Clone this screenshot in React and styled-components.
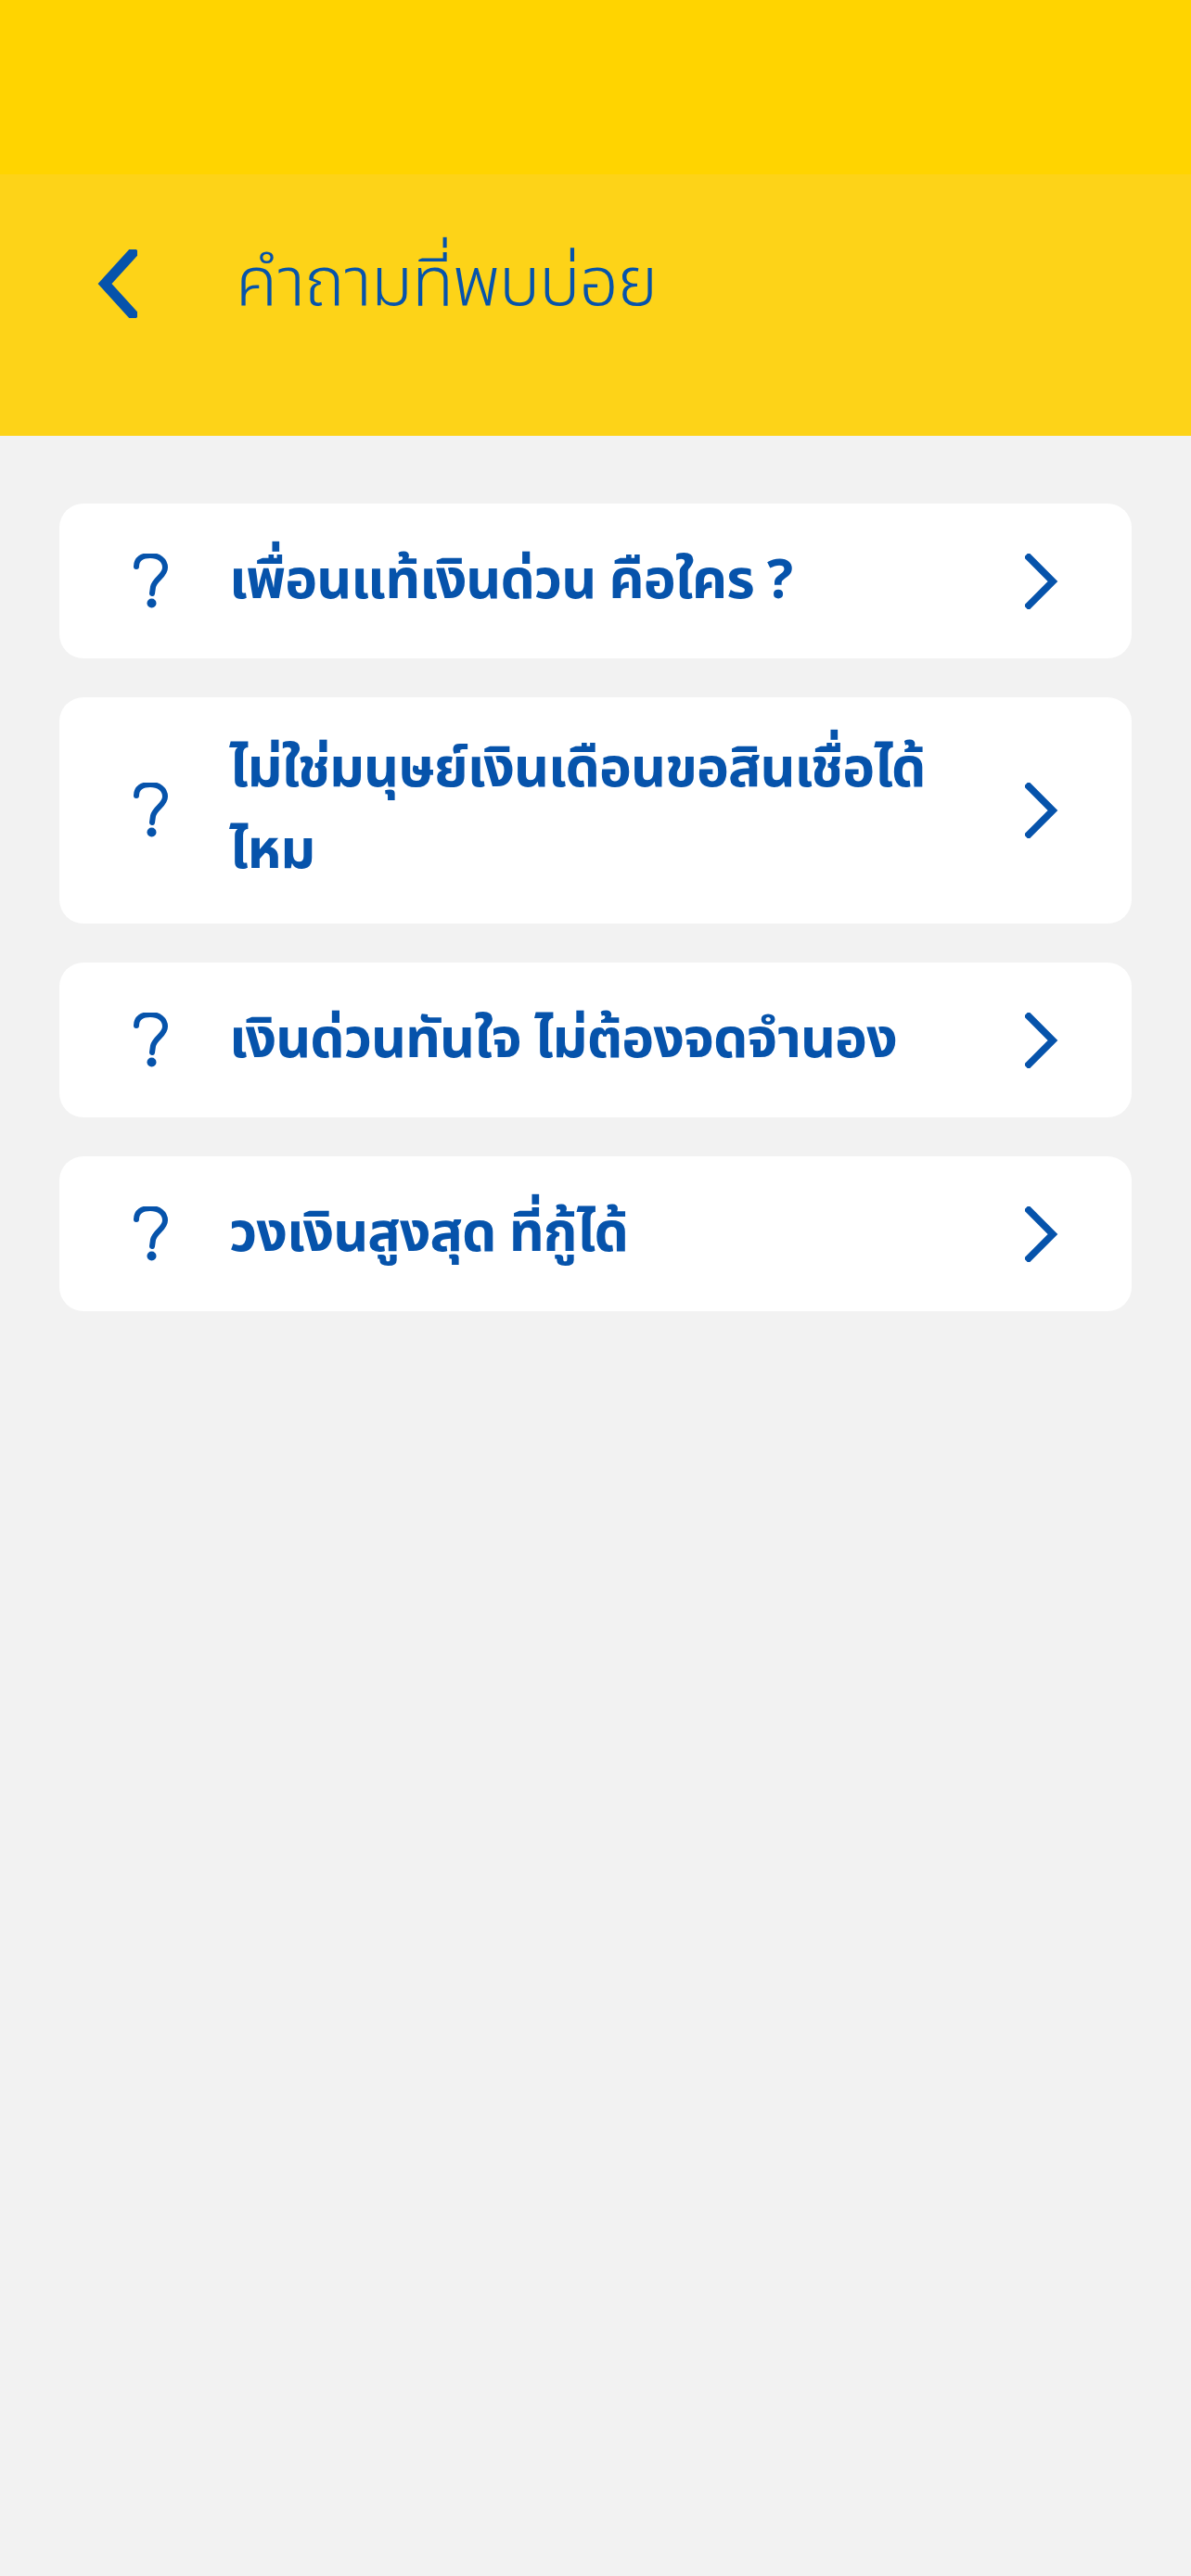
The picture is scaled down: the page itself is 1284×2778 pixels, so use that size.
import styled, { createGlobalStyle } from "styled-components";

const BLUE = "#0653ab";

const GlobalStyle = createGlobalStyle`
  html, body {
    margin: 0;
    padding: 0;
    background: #f2f2f2;
  }
  body {
    font-family: "Noto Sans Thai", "Noto Sans", sans-serif;
  }
`;

const questions = [
  "เพื่อนแท้เงินด่วน คือใคร ?",
  "ไม่ใช่มนุษย์เงินเดือนขอสินเชื่อได้ไหม",
  "เงินด่วนทันใจ ไม่ต้องจดจำนอง",
  "วงเงินสูงสุด ที่กู้ได้",
];

const QuestionIcon = () => (
  <svg width="40" height="60" viewBox="0 0 40 60" fill="none">
    <path
      d="M4 14 C4 6 10 2 19 2 C28 2 35 7 35 15 C35 24 24 27 22 36 L21 43"
      stroke={BLUE}
      strokeWidth="6"
      strokeLinecap="round"
      fill="none"
    />
    <circle cx="20.5" cy="53.5" r="5" fill={BLUE} />
  </svg>
);

const Chevron = ({ left }) => (
  <svg width={left ? 44 : 36} height={left ? 74 : 60} viewBox={left ? "0 0 44 74" : "0 0 36 60"}>
    {left ? (
      <path d="M39 4 L9 37 L39 70" stroke={BLUE} strokeWidth="11" fill="none" strokeLinecap="square" />
    ) : (
      <path d="M4 4 L30 30 L4 56" stroke={BLUE} strokeWidth="7.5" fill="none" strokeLinecap="square" />
    )}
  </svg>
);

const App = () => {
  return (
    <Page>
      <GlobalStyle />
      <StatusBar />
      <Header>
        <BackButton aria-label="back">
          <Chevron left />
        </BackButton>
        <Title>คำถามที่พบบ่อย</Title>
      </Header>
      <List>
        {questions.map((q) => (
          <Card key={q}>
            <IconCell>
              <QuestionIcon />
            </IconCell>
            <CardText>{q}</CardText>
            <ArrowCell>
              <Chevron />
            </ArrowCell>
          </Card>
        ))}
      </List>
    </Page>
  );
};

export default App;

const Page = styled.div`
  min-height: 2778px;
  background: #f2f2f2;
  display: flex;
  flex-direction: column;
`;

const StatusBar = styled.div`
  height: 188px;
  background: #ffd400;
`;

const Header = styled.header`
  height: 282px;
  background: #fdd318;
  display: flex;
  align-items: center;
  padding-left: 104px;
  padding-bottom: 46px;
  box-sizing: border-box;
`;

const BackButton = styled.button`
  border: none;
  background: none;
  padding: 0;
  width: 44px;
  height: 74px;
  display: flex;
  cursor: pointer;
`;

const Title = styled.h1`
  margin: 0 0 0 106px;
  font-size: 74px;
  font-weight: 300;
  color: ${BLUE};
  letter-spacing: -1px;
`;

const List = styled.div`
  display: flex;
  flex-direction: column;
  gap: 42px;
  padding: 73px 64px 0;
`;

const Card = styled.div`
  background: #fff;
  border-radius: 26px;
  min-height: 167px;
  box-sizing: border-box;
  padding: 34px 0;
  display: flex;
  align-items: center;
`;

const IconCell = styled.div`
  width: 40px;
  margin-left: 79px;
  display: flex;
`;

const CardText = styled.div`
  margin-left: 64px;
  width: 800px;
  font-size: 59px;
  font-weight: 700;
  line-height: 88px;
  color: ${BLUE};
  letter-spacing: -1px;
`;

const ArrowCell = styled.div`
  margin-left: auto;
  margin-right: 79px;
  display: flex;
`;
